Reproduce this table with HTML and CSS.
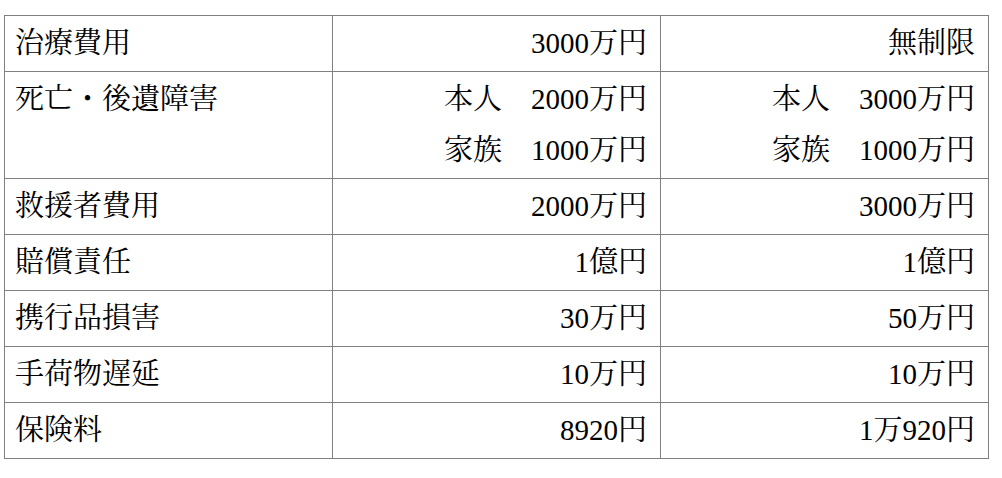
FILE: index.html
```html
<!DOCTYPE html>
<html>
<head>
<meta charset="utf-8">
<link rel="stylesheet" href="styles.css">
</head>
<body>
<table class="plan">
  <colgroup><col class="c"><col class="c"><col class="c"></colgroup>
  <tr><td class="label">治療費用</td><td class="val">3000万円</td><td class="val">無制限</td></tr>
  <tr><td class="label">死亡・後遺障害</td><td class="val">本人　2000万円<br>家族　1000万円</td><td class="val">本人　3000万円<br>家族　1000万円</td></tr>
  <tr><td class="label">救援者費用</td><td class="val">2000万円</td><td class="val">3000万円</td></tr>
  <tr><td class="label">賠償責任</td><td class="val">1億円</td><td class="val">1億円</td></tr>
  <tr><td class="label">携行品損害</td><td class="val">30万円</td><td class="val">50万円</td></tr>
  <tr><td class="label">手荷物遅延</td><td class="val">10万円</td><td class="val">10万円</td></tr>
  <tr><td class="label">保険料</td><td class="val">8920円</td><td class="val">1万920円</td></tr>
</table>
</body>
</html>
```
FILE: styles.css
```css
html, body {
  margin: 0;
  padding: 0;
  background: #ffffff;
}
body {
  font-family: "Liberation Serif", "Noto Serif CJK JP", serif;
  color: #000000;
}
.plan {
  border-collapse: collapse;
  margin: 15px 0 0 4px;
  width: 985px;
  table-layout: fixed;
  font-size: 29px;
  line-height: 51px;
}
.plan .c {
  width: 328px;
}
.plan td {
  border: 1px solid #808080;
  padding: 2px 13px 2px 10px;
  vertical-align: top;
}
.plan .val {
  text-align: right;
}
```
